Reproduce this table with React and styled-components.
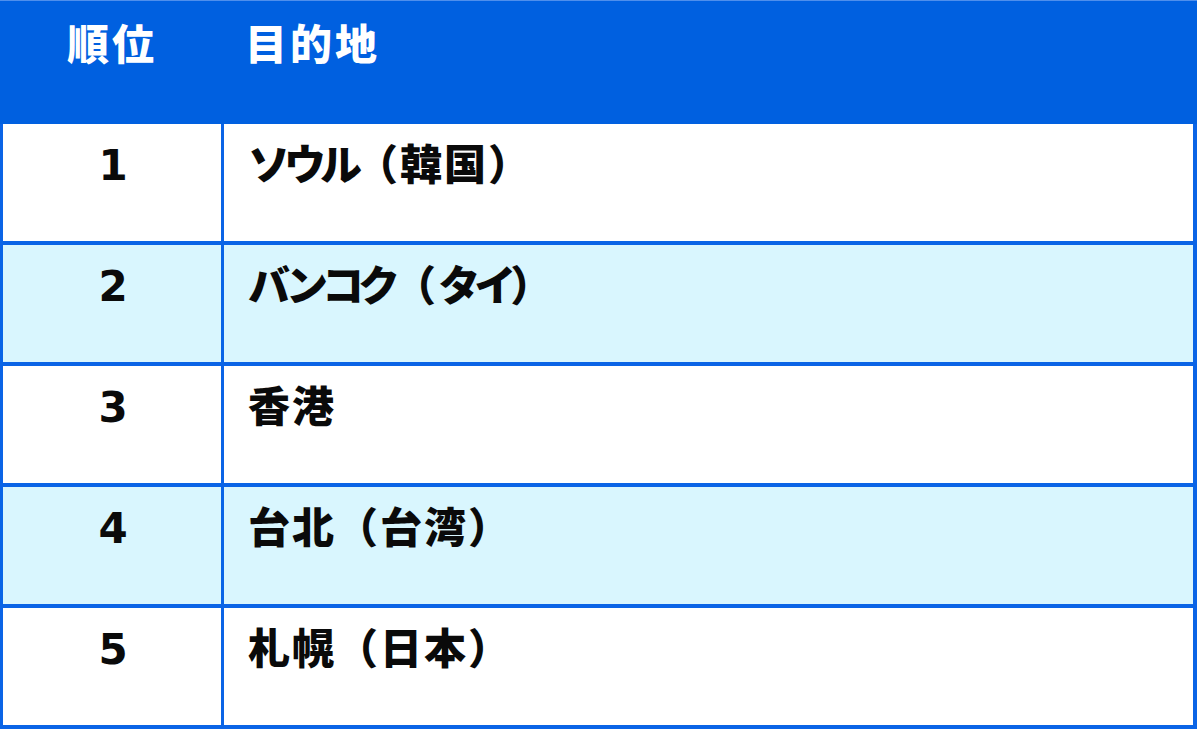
import React from "react";
import styled, { createGlobalStyle } from "styled-components";

const Global = createGlobalStyle`
  html, body { margin: 0; padding: 0; background: #ffffff; }
  body { font-family: "Noto Sans CJK JP", "Noto Sans", sans-serif; }
`;

const Table = styled.div`
  width: 1197px;
  display: flex;
  flex-direction: column;
  gap: 4px;
  background: #0a64e6;
  padding: 0 4px 4px 3px;
  box-sizing: border-box;
  border-top: 1px solid #4f8fec;
`;

const HeaderRow = styled.div`
  display: grid;
  grid-template-columns: 221px 1fr;
  height: 123px;
  margin: 0 -4px -4px -3px;
  background: #0060e0;
`;

const HeadCell = styled.div`
  color: #ffffff;
  font-weight: 900;
  font-size: 42px;
  line-height: 50px;
  padding-top: 16px;
  letter-spacing: 3px;
  text-align: ${(p) => (p.$center ? "center" : "left")};
  padding-left: ${(p) => (p.$center ? "3px" : "24px")};
`;

const Row = styled.div`
  display: grid;
  grid-template-columns: 218px 1fr;
  gap: 3px;
  height: 117px;
`;

const Cell = styled.div`
  background: ${(p) => (p.$alt ? "#d9f6fe" : "#ffffff")};
  color: #0a0a0a;
  font-weight: 900;
  line-height: 50px;
`;

const RankCell = styled(Cell)`
  text-align: center;
  font-family: "DejaVu Sans", "Noto Sans CJK JP", sans-serif;
  font-weight: 700;
  font-size: 42px;
  padding-top: 17px;
  padding-left: 2px;
`;

const NameCell = styled(Cell)`
  padding-left: 24px;
  padding-top: 13px;
  font-size: 42px;
  letter-spacing: 2px;
`;

const Kana = styled.span`
  letter-spacing: -6px;
`;

const rows = [
  "ソウル（韓国）",
  "バンコク（タイ）",
  "香港",
  "台北（台湾）",
  "札幌（日本）",
];

function renderName(name) {
  return name
    .split(/([\u30A0-\u30FF]+)/)
    .filter(Boolean)
    .map((part, i) =>
      /^[\u30A0-\u30FF]+$/.test(part) ? <Kana key={i}>{part}</Kana> : <span key={i}>{part}</span>
    );
}

export default function App() {
  return (
    <>
      <Global />
      <Table>
        <HeaderRow>
          <HeadCell $center>順位</HeadCell>
          <HeadCell>目的地</HeadCell>
        </HeaderRow>
        {rows.map((name, i) => (
          <Row key={name}>
            <RankCell $alt={i % 2 === 1}>{i + 1}</RankCell>
            <NameCell $alt={i % 2 === 1}>{renderName(name)}</NameCell>
          </Row>
        ))}
      </Table>
    </>
  );
}
